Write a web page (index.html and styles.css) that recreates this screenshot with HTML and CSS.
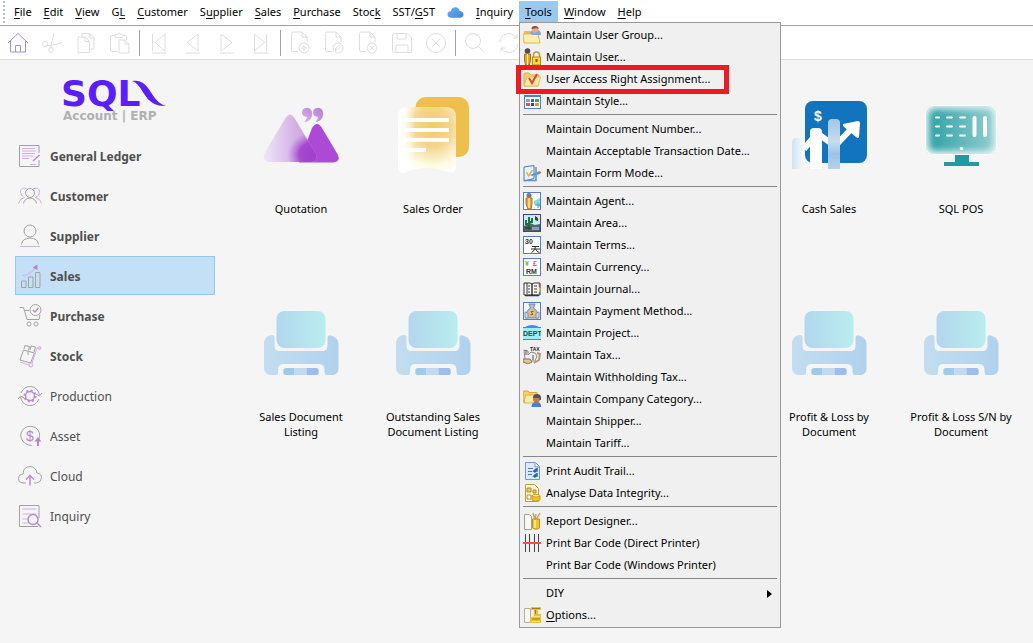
FILE: index.html
```html
<!DOCTYPE html>
<html lang="en">
<head>
<meta charset="utf-8">
<title>SQL Account | ERP</title>
<link rel="stylesheet" href="styles.css">
</head>
<body>
<svg class="defs" aria-hidden="true">
  <defs>
    <linearGradient id="paper"><stop offset="0" stop-color="#b3d6ee"/><stop offset="1" stop-color="#b8edee"/></linearGradient>
    <linearGradient id="printer-body"><stop offset="0" stop-color="#c3ddf0"/><stop offset="1" stop-color="#b0d2ed"/></linearGradient>
    <linearGradient id="hill"><stop offset="0" stop-color="#f0e6f7"/><stop offset=".6" stop-color="#d3b0e6"/><stop offset="1" stop-color="#c79be0"/></linearGradient>
    <radialGradient id="hill-glow" cx=".95" cy=".85" r=".5"><stop offset="0" stop-color="#a13fcb"/><stop offset=".55" stop-color="#a13fcb" stop-opacity=".9"/><stop offset="1" stop-color="#b670d8" stop-opacity="0"/></radialGradient>
    <linearGradient id="quote" x1="1" x2="0" y2="1"><stop offset="0" stop-color="#b47ad8"/><stop offset="1" stop-color="#d9b5ec"/></linearGradient>
    <radialGradient id="note" cx=".6" cy=".3" r=".75"><stop offset="0" stop-color="#f2ca67"/><stop offset=".4" stop-color="#f4d58a"/><stop offset=".8" stop-color="#fffbe4"/><stop offset="1" stop-color="#ffffff"/></radialGradient>
    <linearGradient id="note-edge"><stop offset="0" stop-color="#fff"/><stop offset=".1" stop-color="#fff" stop-opacity=".8"/><stop offset=".3" stop-color="#fff" stop-opacity="0"/></linearGradient>
    <linearGradient id="bar-left"><stop offset="0" stop-color="#cfe3f3"/><stop offset="1" stop-color="#f7fafc"/></linearGradient>
    <linearGradient id="bar-right" x2="0" y2="1"><stop offset="0" stop-color="#a0c6e5"/><stop offset=".45" stop-color="#c6dcef"/><stop offset=".7" stop-color="#9cc4e4"/><stop offset="1" stop-color="#b4d2ea"/></linearGradient>
    <linearGradient id="screen"><stop offset="0" stop-color="#2fa2a6"/><stop offset="1" stop-color="#8fcccf"/></linearGradient>
    <linearGradient id="cloud" x2="1" y2="1"><stop offset="0" stop-color="#6db0f2"/><stop offset="1" stop-color="#3f86d8"/></linearGradient>
    <filter id="soft"><feGaussianBlur stdDeviation="3"/></filter>
    <clipPath id="screen-clip"><rect x="4" y="9" width="72" height="50" rx="8"/></clipPath>
  </defs>
  <symbol id="print-tile" viewBox="0 0 80 80">
    <rect x="15.500" y="7" width="49" height="37" rx="8" fill="url(#paper)"/>
    <path d="M3 40c0-5 3-9 8-9 2 0 2.500 1 2.500 3v8c0 3 2 5 5 5h43c3 0 5-2 5-5v-8c0-2 1-3 3-2.500 5 1 8 4 8 9V64c0 5-3 7-6 7h-6c-1.500 0-2-1-2-3v-2c0-4-2-6-6-6H23c-4 0-6 2-6 6v2c0 2-.5 3-2 3h-5c-4 0-7-3-7-7z" fill="url(#printer-body)"/>
    <path d="M33.500 64H25c-2 0-2.700 1-2.700 3v2q0 2 2 2h9.200z" fill="#9fcbea"/>
    <path d="M33.500 64h12v7h-12z" fill="#c4d8f0"/>
    <path d="M45.500 64H55c2 0 2.700 1 2.700 3v2q0 2-2 2H45.500z" fill="#9dbdeb"/>
  </symbol>
  <symbol id="page-icon" viewBox="0 0 24 24">
    <path d="M3.500 19V2.500q0-1.500 1.500-1.500h9l5 5v5M14 1v5h5M3.500 19q0 1.500 1.500 1.500h5"/>
  </symbol>
</svg>

<nav class="menubar" aria-label="Main menu">
  <span class="grip"></span>
  <button class="menu"><u>F</u>ile</button>
  <button class="menu"><u>E</u>dit</button>
  <button class="menu"><u>V</u>iew</button>
  <button class="menu">G<u>L</u></button>
  <button class="menu"><u>C</u>ustomer</button>
  <button class="menu">S<u>u</u>pplier</button>
  <button class="menu"><u>S</u>ales</button>
  <button class="menu"><u>P</u>urchase</button>
  <button class="menu">Stoc<u>k</u></button>
  <button class="menu">SST/<u>G</u>ST</button>
  <button class="menu menu-cloud" aria-label="Cloud"><svg width="17" height="18" viewBox="0 0 18 18"><path d="M4 15q-3.500-.3-3.500-3.500Q.8 8.500 4 8.300 5 4 9 4q3.500.3 4.500 4 3.800.3 4 3.600-.2 3.200-3.500 3.400z" fill="url(#cloud)"/></svg></button>
  <button class="menu"><u>I</u>nquiry</button>
  <div class="menu-host">
    <button class="menu menu-open" aria-expanded="true"><u>T</u>ools</button>
    <ul class="dropdown">
      <li><button class="entry"><svg class="entry-icon" viewBox="0 0 18 18"><path d="M1 5h6l2 2h7v10H1z" fill="#e7bd58"/><path d="M0 8h15l2 9H1z" fill="#fdeeb0" stroke="#e3b44e"/><path d="M7 7q0-2 3-3h4q4 0 4 5h-9z" fill="#7fa8dc"/><circle cx="12" cy="3.500" r="3.200" fill="#e9ad84"/><path d="M8.500 3q0-3 3.500-3 4 0 3.500 3.500L14 2z" fill="#8d5134"/></svg>Maintain User Group...</button></li>
      <li><button class="entry"><svg class="entry-icon" viewBox="0 0 18 18"><circle cx="4.500" cy="3" r="2.800" fill="#4c4c52"/><path d="M1.500 6h6v6l-1 5h-4l-1-5z" fill="#eea820" stroke="#a0701c"/><path d="M4.500 6v11" stroke="#fff3c0"/><path d="M10.500 10V7q0-3 3-3t3 3v3" fill="none" stroke="#b59a45" stroke-width="1.500"/><rect x="9.500" y="9" width="8" height="8" fill="#f9d93b" stroke="#b78a16"/><path d="M13.500 11v3" stroke="#80600d" stroke-width="2"/></svg>Maintain User...</button></li>
      <li class="marked"><button class="entry"><svg class="entry-icon" viewBox="0 0 18 18"><path d="M1 16V4q0-1 1-1h4l2 2h8l-1 11z" fill="#f3cf73" stroke="#dca94a"/><path d="M1 16l3-9h13.500L15 16z" fill="#fce9a8" stroke="#e6bd5c"/><path d="M6 8l3 5 5-9" fill="none" stroke="#e8452c" stroke-width="2"/></svg>User Access Right Assignment...</button></li>
      <li><button class="entry"><svg class="entry-icon" viewBox="0 0 18 18"><rect x="1.500" y="3.500" width="16" height="13" fill="#fff" stroke="#4c7fd6"/><path d="M1 4h17" stroke="#4c7fd6" stroke-width="2"/><path d="M3 7h4v3H3z" fill="#9a9ad0"/><path d="M8 7h3v3H8z" fill="#3b62c4"/><path d="M12 7h4v3h-4z" fill="#41a94c"/><path d="M3 11h4v3H3z" fill="#e0524b"/><path d="M8 11h3v3H8z" fill="#33489c"/><path d="M12 11h4v3h-4z" fill="#d29f2f"/></svg>Maintain Style...</button></li>
      <li class="rule" role="separator"></li>
      <li><button class="entry"><span class="entry-icon"></span>Maintain Document Number...</button></li>
      <li><button class="entry"><span class="entry-icon"></span>Maintain Acceptable Transaction Date...</button></li>
      <li><button class="entry"><svg class="entry-icon" viewBox="0 0 18 18"><path d="M1 3l10-1.500v13L1 17z" fill="#e9f4ff" stroke="#3f78c4"/><path d="M1 16.500h12V3" fill="none" stroke="#5a90d6" stroke-width="1.500"/><path d="M3.500 8l2 4 4-6" fill="none" stroke="#e3b440" stroke-width="1.500"/><path d="M7 11l9-3.500 2 .5-1 2-8 2z" fill="#5b93dc"/><path d="M15 7l3 1-1 2z" fill="#c96a4f"/></svg>Maintain Form Mode...</button></li>
      <li class="rule" role="separator"></li>
      <li><button class="entry"><svg class="entry-icon" viewBox="0 0 18 18"><rect x=".5" y=".5" width="17" height="17" fill="#fff" stroke="#4f7fd4"/><circle cx="6" cy="3.500" r="2.500" fill="#77777c"/><path d="M3 6h6v6l-1 5H5l-2-5z" fill="#eaa62a" stroke="#a8782c"/><path d="M6 6v10" stroke="#fff"/><path d="M11 9l6-3v9l-6-3z" fill="#86d7e8"/><path d="M12 13h5M15 11v5" stroke="#45a4be"/></svg>Maintain Agent...</button></li>
      <li><button class="entry"><svg class="entry-icon" viewBox="0 0 18 18"><rect x=".5" y=".5" width="17" height="17" fill="#c7effa" stroke="#3f3cae"/><path d="M1 17v-5l6-3 5 2 5-1v7z" fill="#54685f"/><path d="M6 16V3M3 6v4h3M9 4v4H6" fill="none" stroke="#1f7342" stroke-width="2"/><path d="M12 2q4 1 3 5l-3-1z" fill="#363b42"/><path d="M13 2h3v3z" fill="#fff06a"/><path d="M9 13h7v3H9z" fill="#8b94e4"/><path d="M2 14h6" stroke="#212d29"/></svg>Maintain Area...</button></li>
      <li><button class="entry"><svg class="entry-icon" viewBox="0 0 18 18"><rect x=".5" y=".5" width="17" height="17" fill="#fff" stroke="#4f7fd4"/><text x="2" y="8" class="icon-text" fill="#333">30</text><path d="M9 10.500h7M8 13h9M12.500 10.500q0 4-4 6M12.500 13q1 3 4 3.500" fill="none" stroke="#333"/></svg>Maintain Terms...</button></li>
      <li><button class="entry"><svg class="entry-icon" viewBox="0 0 18 18"><rect x=".5" y=".5" width="17" height="17" fill="#fff" stroke="#4f7fd4"/><text x="2" y="8" class="icon-text" fill="#4bc04b">¥</text><text x="10" y="8" class="icon-text" fill="#d03d9c">£</text><text x="3" y="16" class="icon-text" fill="#333">RM</text></svg>Maintain Currency...</button></li>
      <li><button class="entry"><svg class="entry-icon" viewBox="0 0 18 18"><path d="M1 3h6l2 1 2-1h6v12H1z" fill="#fff" stroke="#333"/><path d="M9 4v12M2 15.500h14" stroke="#333" stroke-width="1.500"/><path d="M4 3v11M5 6h2M5 9h2M5 12h2M11 6h3M11 9h3M11 12h3" stroke="#333"/><path d="M16.500 4v3" stroke="#e53935" stroke-width="1.500"/><path d="M16.500 8v3" stroke="#f2c230" stroke-width="1.500"/><path d="M16.500 12v3" stroke="#3787d4" stroke-width="1.500"/></svg>Maintain Journal...</button></li>
      <li><button class="entry"><svg class="entry-icon" viewBox="0 0 18 18"><rect x=".5" y=".5" width="17" height="17" fill="#f2f7ff" stroke="#4f7fd4"/><path d="M6 2h6l-1.500 4q5 3 5 10h-13q0-7 5-10z" fill="#b8bdc4" stroke="#7e8792"/><path d="M2 10l3 1v5H2zM16 10l-3 1v5h3z" fill="#d5d9df" stroke="#8b94a0"/><circle cx="9" cy="11" r="3" fill="#eec55b"/><path d="M10.500 9.500H8l2 3H7.500" fill="none" stroke="#94681c"/></svg>Maintain Payment Method...</button></li>
      <li><button class="entry"><svg class="entry-icon" viewBox="0 0 18 18"><path d="M2 3q7-4 14 0z" fill="#4f86e4"/><path d="M0 3h18v13H0z" fill="#9deef2"/><path d="M0 3.500h18M0 15.500h18" stroke="#4f86e4"/><text x="0" y="12" class="icon-text" fill="#1e4d50">DEPT</text></svg>Maintain Project...</button></li>
      <li><button class="entry"><svg class="entry-icon" viewBox="0 0 18 18"><text x="7" y="5" class="icon-text icon-text-small" fill="#222">TAX</text><path d="M1 4l4 1v4l3-3 4 1 2 3-2 5H5l-3-2z" fill="#eee" stroke="#8b8b86"/><path d="M0 13h7l2 3-4 2-5-2z" fill="#dec397" stroke="#8c7450"/><path d="M14 7l3 1-1 6-5 3" fill="none" stroke="#b29a77" stroke-width="2"/><path d="M3 4v5M10 9v5" stroke="#555"/></svg>Maintain Tax...</button></li>
      <li><button class="entry"><span class="entry-icon"></span>Maintain Withholding Tax...</button></li>
      <li><button class="entry"><svg class="entry-icon" viewBox="0 0 18 18"><path d="M0 12V2q0-1 1-1h4l1 1.500h8V12z" fill="#f5d16c" stroke="#d9a53c"/><path d="M1 13l1.500-8H15v8z" fill="#fdeba7" stroke="#dfae47"/><path d="M8.500 17q0-5 5-5t4.500 5z" fill="#4b7bdd"/><circle cx="13.500" cy="9" r="3.500" fill="#d07846"/><path d="M10 8q0-4 4-4t4 4v2h-1.500V8z" fill="#55545a"/></svg>Maintain Company Category...</button></li>
      <li><button class="entry"><span class="entry-icon"></span>Maintain Shipper...</button></li>
      <li><button class="entry"><span class="entry-icon"></span>Maintain Tariff...</button></li>
      <li class="rule" role="separator"></li>
      <li><button class="entry"><svg class="entry-icon" viewBox="0 0 18 18"><path d="M2.500.5h10l4 4v13h-14z" fill="#dbeafb" stroke="#6c9bd2"/><path d="M12 1v4h4" fill="#fff" stroke="#6c9bd2"/><path d="M5 6.500h5M5 9.500h4M5 12.500h4" stroke="#4a78ba"/><path d="M14 6v3h-3l2-2M14 11v3h-3l2-2M11 9l1.500 1.500M11 14l1.500 1.500" fill="none" stroke="#2460b8" stroke-width="1.500"/></svg>Print Audit Trail...</button></li>
      <li><button class="entry"><svg class="entry-icon" viewBox="0 0 18 18"><path d="M2.500.5h9l4 4v13h-13z" fill="#fff8dc" stroke="#c69a3d"/><path d="M4 4h4v4H4zM10 6h3v3h-3z" fill="#f0c946" stroke="#b98b23"/><path d="M4 11h4v4H4z" fill="#fff" stroke="#b98b23"/><ellipse cx="13" cy="12" rx="4" ry="1.800" fill="#fbe48b" stroke="#d2a01e"/><path d="M9 12v4q4 2.500 8 0v-4q-4 2.500-8 0z" fill="#f2c326" stroke="#d2a01e"/></svg>Analyse Data Integrity...</button></li>
      <li class="rule" role="separator"></li>
      <li><button class="entry"><svg class="entry-icon" viewBox="0 0 18 18"><path d="M1.500 2.500h5l2 2v13h-7z" fill="#f7f7f5" stroke="#a79f90"/><path d="M12 8L10 1M12 8l1-6M13 8l4-7" stroke="#c3a565" stroke-width="1.500"/><path d="M9.500 7h7v8q0 2-2 2h-3q-2 0-2-2z" fill="#f1c52c" stroke="#bc8f17"/><path d="M12 8v8" stroke="#fff0a0" stroke-width="1.500"/></svg>Report Designer...</button></li>
      <li><button class="entry"><svg class="entry-icon" viewBox="0 0 18 18"><path d="M2.500 0v18M6.500 0v18M11.500 0v18M15.500 0v18" stroke="#444"/><path d="M0 9h18" stroke="#ff4a4a" stroke-width="2"/></svg>Print Bar Code (Direct Printer)</button></li>
      <li><button class="entry"><span class="entry-icon"></span>Print Bar Code (Windows Printer)</button></li>
      <li class="rule" role="separator"></li>
      <li><button class="entry"><span class="entry-icon"></span>DIY<svg class="submenu-arrow" viewBox="0 0 5 8"><path d="M0 0l5 4-5 4z"/></svg></button></li>
      <li><button class="entry"><svg class="entry-icon" viewBox="0 0 18 18"><path d="M1.500 2.500h6v14h-6z" fill="#f7f7f5" stroke="#b8ae98"/><path d="M8 1h10v3h-3v4h3v9H7v-6h4V4H8z" fill="#eec02f"/><path d="M9 2.500h8M12.500 4v4M9 13h8" stroke="#a67a12"/><path d="M9 10.500h8M9 15.500h8" stroke="#fbe58b"/></svg><span><u>O</u>ptions...</span></button></li>
    </ul>
  </div>
  <button class="menu"><u>W</u>indow</button>
  <button class="menu"><u>H</u>elp</button>
</nav>

<div class="toolbar" role="toolbar" aria-label="Record tools">
  <button class="tool tool-home" aria-label="Home"><svg viewBox="0 0 24 24"><path d="M2 12L12 2.500 22 12M4.500 10v11h15V10M9.500 21v-6.500h5V21"/></svg></button>
  <button class="tool" aria-label="Cut"><svg viewBox="0 0 24 24"><circle cx="5" cy="13" r="2.500"/><circle cx="11" cy="19" r="2.500"/><path d="M7 14.500l3 .5 12-3.500M11 16.500V14l3-12"/></svg></button>
  <button class="tool" aria-label="Copy"><svg viewBox="0 0 24 24"><path d="M8 6V2.500h8l4 4V18h-4M16 2.500V7h4M4 6h7l4.500 4v11.500H4zM11 6v4.500h4.500"/></svg></button>
  <button class="tool" aria-label="Paste"><svg viewBox="0 0 24 24"><path d="M10 20.500H4q-1.500 0-1.500-1.500V6q0-1.500 1.500-1.500h3M15 4.500h2q1.500 0 1.500 1.500v3M7 6.500V3.500h2q2-3 4 0h2v3zM11 9h6l4 4v9H11zM17 9v4h4"/></svg></button>
  <span class="tool-rule"></span>
  <button class="tool" aria-label="First"><svg viewBox="0 0 24 24"><path d="M5.500 3v17M18 3v17L8 11.500zM5 22h14"/></svg></button>
  <button class="tool" aria-label="Previous"><svg viewBox="0 0 24 24"><path d="M17 3v17L6 11.500zM5 22h14"/></svg></button>
  <button class="tool" aria-label="Next"><svg viewBox="0 0 24 24"><path d="M6 3v17l11-8.500zM5 22h14"/></svg></button>
  <button class="tool" aria-label="Last"><svg viewBox="0 0 24 24"><path d="M17.500 3v17M5.500 3v17l10-8.500zM5 22h14"/></svg></button>
  <span class="tool-rule"></span>
  <button class="tool" aria-label="New"><svg viewBox="0 0 24 24"><use href="#page-icon"/><circle cx="16" cy="17" r="5"/><path d="M16 14v6M13 17h6"/></svg></button>
  <button class="tool" aria-label="Edit record"><svg viewBox="0 0 24 24"><use href="#page-icon"/><circle cx="16" cy="17" r="5"/><path d="M13 20l1-3 3.500-3 1.500 1.500-3.500 3z"/></svg></button>
  <button class="tool" aria-label="Delete"><svg viewBox="0 0 24 24"><use href="#page-icon"/><circle cx="16" cy="17" r="5"/><path d="M14 15l4 4M18 15l-4 4"/></svg></button>
  <button class="tool" aria-label="Save"><svg viewBox="0 0 24 24"><path d="M4 2.500h13l4.500 4.500v13q0 1.500-1.500 1.500H4q-1.500 0-1.500-1.500V4q0-1.500 1.500-1.500zM7 2.500V8h9V2.500M6 21.500V14h12v7.500"/></svg></button>
  <button class="tool" aria-label="Cancel"><svg viewBox="0 0 24 24"><circle cx="12" cy="12" r="9.500"/><path d="M8 8l8 8M16 8l-8 8"/></svg></button>
  <span class="tool-rule"></span>
  <button class="tool" aria-label="Find"><svg viewBox="0 0 24 24"><circle cx="10" cy="10" r="7.500"/><path d="M15.500 15.500L21 21"/></svg></button>
  <button class="tool" aria-label="Refresh"><svg viewBox="0 0 24 24"><path d="M3 11q1-8 9-8.500 5 0 8 4.500V3M20 7h-4M21 13q-1 8-9 8.500-5 0-8-4.500v4M4 17h4"/></svg></button>
</div>

<div class="workspace">
  <aside class="sidebar">
    <svg class="logo" viewBox="0 0 110 60" role="img" aria-label="SQL Account | ERP">
      <text x="0" y="38" class="logo-name">SQL</text>
      <path d="M71 13c19-3 17 20 34 25-23 1-22-22-34-25z" fill="#5b1fff"/>
      <text x="2" y="52" class="logo-line">Account | ERP</text>
    </svg>
    <button class="module module-strong"><svg viewBox="0 0 24 24"><path d="M21 9V1.500H1.500v21H21V16" class="ink"/><path d="M4 4.500h13M4 7h14M4 9.500h13M4 12h11M4 14.500h7M12 20.500h6" class="lilac"/><path d="M15 17l6.500-6" class="violet"/></svg>General Ledger</button>
    <button class="module module-strong"><svg viewBox="0 0 24 24"><path d="M9 5Q3 2 2.500 8q0 4 4 5.500-5 1-6 6M15 5q6-3 6.500 3 0 4-4 5.500 5 1 6 6" class="lilac"/><circle cx="12" cy="9" r="4.500" class="ink"/><path d="M5.500 19.500q1-5 6.500-5.500 5.500.5 6.500 5.500" class="ink"/></svg>Customer</button>
    <button class="module module-strong"><svg viewBox="0 0 24 24"><circle cx="12" cy="7" r="6" class="ink"/><path d="M3.500 20.500Q4 14.500 12 14q8 .5 8.500 6.500" class="ink"/><path d="M2 22.500h20" class="lilac"/></svg>Supplier</button>
    <button class="module module-strong module-active" aria-current="page"><svg viewBox="0 0 24 24"><path d="M3.500 17h4.500v6.500H3.500zM10.500 13H15v10.500h-4.500zM17.500 8.500H22v15h-4.500z" class="ink"/><path d="M4.500 11.500Q13 11 18 3" class="lilac"/><path d="M14.500 3.500L19.500.5v5.500z" fill="#b980d8"/></svg>Sales</button>
    <button class="module module-strong"><svg viewBox="0 0 24 24"><path d="M1.500 3.500h4l3.500 12h12l1-5M7 6.500h4" class="ink"/><circle cx="17.500" cy="6" r="5.500" class="ink"/><path d="M15 6l2 2 3.500-4" class="violet"/><circle cx="11" cy="20" r="2" class="ink"/><circle cx="18" cy="20" r="2" class="ink"/></svg>Purchase</button>
    <button class="module module-strong"><svg viewBox="0 0 24 24"><path d="M5.500 6l11 3-4 10-10.500-3zM6 5l1-3.500 4.500 1-1 4M12 6l1-4 4.500 1-1.500 5M10 8v3" class="ink"/><path d="M2 18l9 3M14 19L19 4h4" class="lilac"/><circle cx="13" cy="21" r="2" class="lilac"/><circle cx="21.500" cy="4" r="1.500" class="lilac"/></svg>Stock</button>
    <button class="module"><svg viewBox="0 0 24 24"><path d="M3 9Q6 2 13 2.500q7 1 8.500 8.500M24 9l-2.500 3L18 10M21 15q-3 7-10 6.500Q4 20.500 2.500 13M0 15l2.500-3L6 14" class="ink"/><circle cx="12" cy="12" r="4.500" class="violet"/><circle cx="12" cy="12" r="5.500" class="cog"/></svg>Production</button>
    <button class="module"><svg viewBox="0 0 24 24"><path d="M21 15q2-7-3-11Q12 .5 6.500 4 1 9 3.500 15q3 6 10 6.500" class="ink"/><text x="8" y="17" class="coin">$</text><path d="M20 22v-6" stroke="#b980d8" stroke-width="2"/><path d="M16.500 17.500L20 13l3.500 4.500z" fill="#b980d8"/></svg>Asset</button>
    <button class="module"><svg viewBox="0 0 24 24"><path d="M8 19H5Q.5 18.500.5 14.500.5 10.500 5 10q0-7 7-7.500Q18 3 19 9q4.500.5 4.500 5-.5 4.500-5 5H16" class="ink"/><path d="M12 21.500V12M8 15.500l4-4 4 4" class="violet"/></svg>Cloud</button>
    <button class="module"><svg viewBox="0 0 24 24"><path d="M21 14V1.500H1.500v21H20" class="ink"/><path d="M4.500 5h14M4.500 10h14M4.500 15h5M4.500 19h6" class="lilac"/><circle cx="15" cy="15.500" r="5" class="violet"/><path d="M19 19l4 4" class="violet"/></svg>Inquiry</button>
  </aside>

  <main class="tiles">
    <button class="tile"><svg viewBox="0 0 80 80"><path d="M51 32q5-8 10 0l16 27q3 7-5 7.500H38z" fill="#ac4ad5"/><path d="M24.500 22q4.500-7 9 0L55 58q2 8-5 8H8q-7-1-5-8z" fill="url(#hill)"/><path d="M24.500 22q4.500-7 9 0L55 58q2 8-5 8H8q-7-1-5-8z" fill="url(#hill-glow)"/><path d="M46 11.700q5 .3 5.200 6Q51 24 45 26l-1.500-.5Q46 23 46 21q-5-.5-5-4.500.3-4.500 5-4.800zM57 11.700q5 .3 5.200 6Q62 24 56 26l-1.500-.5Q57 23 57 21q-5-.5-5-4.500.3-4.500 5-4.800z" fill="url(#quote)"/></svg>Quotation</button>
    <button class="tile"><svg viewBox="0 0 80 80"><rect x="22.500" y="1" width="53.500" height="60" rx="10" fill="#efbf4c"/><path d="M15 11h38q10 0 10 10v51q-1 6-8 4-21-8-42 0-7 2-8-4V21q0-10 10-10z" fill="url(#note)"/><path d="M15 11h38q10 0 10 10v51q-1 6-8 4-21-8-42 0-7 2-8-4V21q0-10 10-10z" fill="url(#note-edge)"/><path d="M11 24h45M11 34h45M11 44h45M11 54h22" stroke="#fff" stroke-width="4"/></svg>Sales Order</button>
    <button class="tile tile-fifth"><svg viewBox="0 0 80 80"><rect x="16" y="5" width="62" height="62" rx="8" fill="#1273be"/><text x="25" y="25" class="dollar">$</text><path d="M15 53l13-16 18 13 18-19" fill="none" stroke="#fff" stroke-width="6"/><path d="M54 28l15-3q2 0 2 2l-1 14q-1 2-3 0L54 30z" fill="#fff"/><path d="M3 73V47q0-5 4-5h4q4 0 4 5v26z" fill="url(#bar-left)"/><path d="M21 73V36q0-4 4-4h4q4 0 4 4v37z" fill="#fff"/><path d="M39 73V27q0-4 4-4h4q4 0 4 4v46z" fill="url(#bar-right)"/></svg>Cash Sales</button>
    <button class="tile"><svg viewBox="0 0 80 80"><path d="M34 58h14v8h10v4H23v-4h11z" fill="#1f9ca0"/><rect x="4" y="9" width="72" height="50" rx="8" fill="#e2f2f2"/><g clip-path="url(#screen-clip)"><rect x="8" y="13" width="64" height="42" rx="6" fill="url(#screen)" filter="url(#soft)"/></g><rect x="4.500" y="9.500" width="71" height="49" rx="8" fill="none" stroke="#fafdfd"/><path d="M15 21.500h3M26 21.500h5M39 21.500h5M15 30.500h3M26 30.500h5M39 30.500h5M15 39.500h3M26 39.500h5M39 39.500h5" class="keys"/><path d="M53.500 22v17M64 22v17" class="keys keys-wide"/><circle cx="40.500" cy="52.500" r="1.700" fill="#fff"/></svg>SQL POS</button>
    <button class="tile tile-first"><svg><use href="#print-tile"/></svg>Sales Document Listing</button>
    <button class="tile"><svg><use href="#print-tile"/></svg>Outstanding Sales Document Listing</button>
    <button class="tile tile-fifth"><svg><use href="#print-tile"/></svg>Profit &amp; Loss by Document</button>
    <button class="tile"><svg><use href="#print-tile"/></svg>Profit &amp; Loss S/N by Document</button>
  </main>
</div>
</body>
</html>
```
FILE: styles.css
```css
*,
*::before,
*::after { box-sizing: border-box; }

body {
  margin: 0;
  min-height: 100vh;
  display: flex;
  flex-direction: column;
  background: #f5f5f5;
  color: #000;
  font: 11px/15px "Noto Sans", "Open Sans", sans-serif;
}

button {
  margin: 0;
  padding: 0;
  border: 0;
  background: none;
  color: inherit;
  font: inherit;
}

u { text-underline-offset: 2px; }

.defs { position: absolute; width: 0; height: 0; }

/* Menu bar */
.menubar {
  display: flex;
  align-items: flex-start;
  height: 26px;
  padding-top: 1px;
  background: #fff;
  border-bottom: 1px solid #a0a0a0;
}

.grip {
  width: 2px;
  height: 22px;
  margin: 0 3px;
  background: repeating-linear-gradient(#bbb 0 2px, #fff 2px 4px);
}

.menu { height: 21px; padding: 0 6px; white-space: nowrap; }
.menu-cloud { display: flex; padding-top: 2px; }
.menu-open { background: #99c9ef; }
.menu-host { position: relative; }

.dropdown {
  position: absolute;
  z-index: 2;
  top: 21px;
  left: 0;
  width: 262px;
  margin: 0;
  padding: 1px 3px;
  list-style: none;
  background: #f0f0f0;
  border: 1px solid #999;
}

.entry {
  display: flex;
  align-items: flex-start;
  gap: 5px;
  width: 100%;
  height: 22px;
  padding-top: 2px;
  line-height: 17px;
  text-align: left;
  white-space: nowrap;
}

.entry-icon { flex: none; width: 18px; height: 18px; }

.icon-text { font: bold 7px "Liberation Sans", sans-serif; }
.icon-text-small { font-size: 5px; }

.submenu-arrow { align-self: center; width: 5px; height: 8px; margin: 0 5px 0 auto; }

.rule { height: 6px; padding-top: 2px; }
.rule::before { content: ""; display: block; height: 1px; background: #868686; }

.marked { position: relative; }
.marked::after {
  content: "";
  position: absolute;
  top: -3px;
  left: -7px;
  width: 213px;
  height: 29px;
  border: 5px solid #ed1c24;
  pointer-events: none;
}

/* Toolbar */
.toolbar {
  display: flex;
  align-items: center;
  height: 34px;
  padding-left: 1px;
  background: #fff;
  border-bottom: 1px solid #dcdcdc;
}

.tool { display: flex; justify-content: center; width: 34px; }
.tool svg { width: 24px; height: 24px; fill: none; stroke: #dedede; }
.tool-home svg { stroke: #9c8fe6; }
.tool-rule { width: 1px; height: 26px; margin: 0 2px; background: #a0a0a0; }

/* Workspace */
.workspace { display: flex; flex: 1; }

.sidebar {
  display: flex;
  flex-direction: column;
  gap: 1px;
  flex: none;
  width: 215px;
  padding: 8px 0 0 15px;
}

.logo { width: 110px; height: 60px; margin: 0 0 7px 46px; }
.logo-name { font: bold 36px "DejaVu Sans", sans-serif; fill: #5b1fff; }
.logo-line { font: bold 12px "DejaVu Sans", sans-serif; fill: #b0b0b0; }

.module {
  display: flex;
  align-items: center;
  gap: 8px;
  height: 39px;
  padding: 1px 2px 0;
  border: 1px solid transparent;
  color: #4f4f4f;
  font-size: 12px;
  text-align: left;
}

.module-strong { font-weight: 700; }
.module-active { background: #c4e0f6; border-color: #92c8f2; }
.module svg { width: 24px; height: 24px; overflow: visible; fill: none; }

.ink { stroke: #a2a2a2; }
.lilac { stroke: #d3aee6; }
.violet { stroke: #bd8ad9; stroke-width: 1.5; }
.cog { stroke: #bd8ad9; stroke-width: 2; stroke-dasharray: 2 2.3; }
.coin { font: 14px "Liberation Sans", sans-serif; fill: #b980d8; }

.tiles {
  display: grid;
  flex: 1;
  grid-template-columns: repeat(6, 1fr);
  grid-auto-rows: 208px;
  align-content: start;
  padding: 36px 6px 0 20px;
}

.tile {
  display: flex;
  flex-direction: column;
  align-items: center;
  justify-content: flex-start;
  padding: 0 10px;
}

.tile-first { grid-column: 1; }
.tile-fifth { grid-column: 5; }
.tile svg { flex: none; width: 80px; height: 80px; margin-bottom: 25px; }

.dollar { font: bold 14px "Liberation Sans", sans-serif; fill: #fff; }
.keys { stroke: #fff; stroke-width: 2; stroke-linecap: round; }
.keys-wide { stroke-width: 4; }
```
